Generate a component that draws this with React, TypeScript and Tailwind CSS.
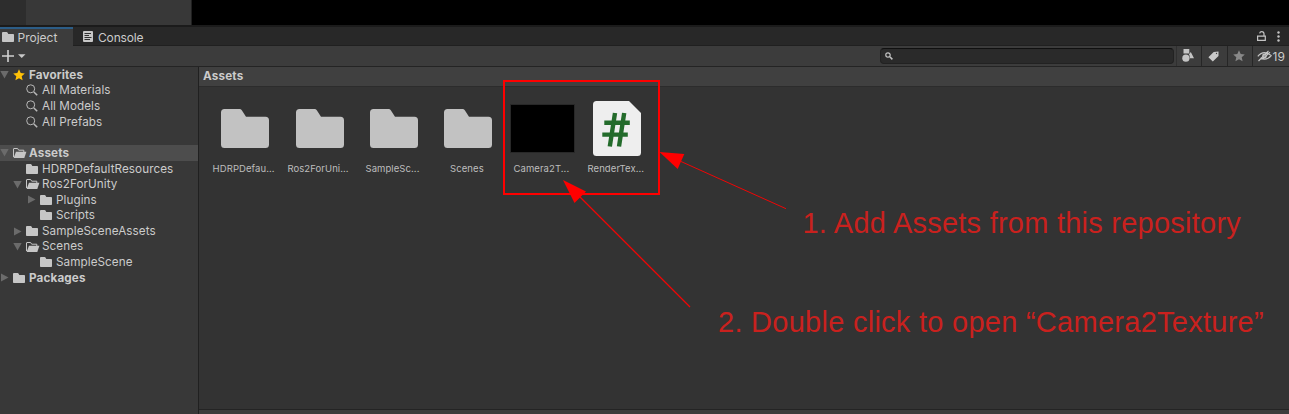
import React from 'react';

function Folder({ className = '' }: { className?: string }) {
  return (
    <svg className={`h-[10px] w-[12px] shrink-0 ${className}`} viewBox="0 0 12 10" fill="#c6c6c6">
      <path d="M0 .9Q0 0 .9 0H4.6Q5.2 0 5.5.6L6.3 2H11.2Q12 2 12 2.8V9.2Q12 10 11.2 10H.8Q0 10 0 9.2Z" />
    </svg>
  );
}

function OpenFolder() {
  return (
    <svg className="h-[10px] w-[13.5px] shrink-0" viewBox="0 0 13.5 10">
      <path d="M.5 9V1Q.5.5 1 .5H4.6L5.7 2.2H10.8V4" fill="none" stroke="#c6c6c6" />
      <path d="M3 3.7H13.4L11.3 10H.6Z" fill="#c6c6c6" />
    </svg>
  );
}

function Search() {
  return (
    <svg className="h-[12px] w-[12px] shrink-0" viewBox="0 0 12 12" fill="none" stroke="#b8b8b8">
      <circle cx="4.7" cy="4.8" r="4" strokeWidth="1" />
      <path d="M7.9 8L11.2 11.2" strokeWidth="1.6" />
    </svg>
  );
}

function Star({ className }: { className: string }) {
  return (
    <svg className={className} viewBox="0 0 12 12" fill="currentColor">
      <path d="M6 .3L7.7 4.1L11.8 4.5L8.7 7.2L9.6 11.3L6 9.2L2.4 11.3L3.3 7.2L.2 4.5L4.3 4.1Z" />
    </svg>
  );
}

function Arrow({ open }: { open?: boolean }) {
  return (
    <svg className="h-[9px] w-[9px] shrink-0" viewBox="0 0 9 9" fill="#6b6b6b">
      <path d={open ? 'M.3 1H8.7L4.5 8.4Z' : 'M1 .5V8.5L8.5 4.5Z'} />
    </svg>
  );
}

type Row = { label: string; pad: string; icon: 'star' | 'search' | 'open' | 'folder'; arrow?: 'open' | 'closed'; text: string };

const bold = 'font-bold text-[11.7px] tracking-[0.13px]';
const normal = 'text-[11.7px] tracking-[0.07px]';

const rows: (Row | null)[] = [
  { label: 'Favorites', pad: 'pl-0', icon: 'star', arrow: 'open', text: bold },
  { label: 'All Materials', pad: 'pl-[13px]', icon: 'search', text: normal },
  { label: 'All Models', pad: 'pl-[13px]', icon: 'search', text: normal },
  { label: 'All Prefabs', pad: 'pl-[13px]', icon: 'search', text: normal },
  null,
  { label: 'Assets', pad: 'pl-0', icon: 'open', arrow: 'open', text: bold },
  { label: 'HDRPDefaultResources', pad: 'pl-[13px]', icon: 'folder', text: normal },
  { label: 'Ros2ForUnity', pad: 'pl-[13px]', icon: 'open', arrow: 'open', text: normal },
  { label: 'Plugins', pad: 'pl-[27px]', icon: 'folder', arrow: 'closed', text: normal },
  { label: 'Scripts', pad: 'pl-[27px]', icon: 'folder', text: normal },
  { label: 'SampleSceneAssets', pad: 'pl-[13px]', icon: 'folder', arrow: 'closed', text: normal },
  { label: 'Scenes', pad: 'pl-[13px]', icon: 'open', arrow: 'open', text: normal },
  { label: 'SampleScene', pad: 'pl-[27px]', icon: 'folder', text: normal },
  { label: 'Packages', pad: 'pl-0', icon: 'folder', arrow: 'closed', text: bold },
];

function TreeRow({ row }: { row: Row }) {
  return (
    <div className={`flex h-[15.64px] items-center ${row.pad} ${row.label === 'Assets' ? 'bg-[#4d4d4d]' : ''}`}>
      <div className="-ml-[0.5px] flex w-[13.5px] shrink-0">{row.arrow && <Arrow open={row.arrow === 'open'} />}</div>
      <div className="flex w-[16px] shrink-0 items-center">
        {row.icon === 'star' && <Star className="h-[12px] w-[12px] text-[#ffc107]" />}
        {row.icon === 'search' && <Search />}
        {row.icon === 'open' && <OpenFolder />}
        {row.icon === 'folder' && <Folder />}
      </div>
      <span className={`whitespace-nowrap leading-[15px] ${row.icon === 'star' || row.icon === 'open' ? 'pt-[0.5px]' : 'pt-[1px]'} ${row.text}`}>{row.label}</span>
    </div>
  );
}

function BigFolder() {
  return (
    <svg className="mt-[8px] h-[39px] w-[48px]" viewBox="0 0 48 39" fill="#c2c2c2">
      <path d="M0 3.5Q0 0 3.5 0H18.5Q20 0 20.8 1.2L25 7.8H44.5Q48 7.8 48 11.3V35.5Q48 39 44.5 39H3.5Q0 39 0 35.5Z" />
    </svg>
  );
}

function ScriptFile() {
  return (
    <svg className="h-[55px] w-[48px]" viewBox="0 0 48 55">
      <path d="M0 3.5Q0 0 3.5 0H36L48 12V51.5Q48 55 44.5 55H3.5Q0 55 0 51.5Z" fill="#eeeeee" />
      <path d="M22 12L16.8 45.5M31.2 12L26 45.5M11.3 21.8H36.8M9.3 33.6H34.8" fill="none" stroke="#236b2b" strokeWidth="4.4" />
    </svg>
  );
}

const assets = ['HDRPDefau...', 'Ros2ForUni...', 'SampleSc...', 'Scenes', 'Camera2T...', 'RenderTex...'];

export default function App() {
  return (
    <div className="relative flex h-[414px] w-[1289px] flex-col overflow-hidden bg-[#383838] font-['Inter',sans-serif] text-[#cbcbcb]">
      <div className="flex h-[27px] shrink-0 border-b-2 border-[#1b1b1b] bg-black">
        <div className="w-[26px] bg-[#2d2d2d]" />
        <div className="w-[166px] border-r-[1.5px] border-[#202020] bg-[#383838]" />
      </div>

      <div className="flex h-[19px] shrink-0 bg-[#282828]">
        <div className="flex w-[73px] items-center border-t-2 border-[#2c5d87] bg-[#3c3c3c] pl-[2px]">
          <Folder className="-mt-[1px]" />
          <span className="ml-[3.5px] mt-[1px] text-[12px] leading-[16px]">Project</span>
        </div>
        <div className="flex grow items-center border-b border-[#202020] pl-[10px]">
          <svg className="h-[11px] w-[10px]" viewBox="0 0 10 11">
            <rect width="10" height="11" rx="1" fill="#c8c8c8" />
            <path d="M1.5 2.5H8M1.5 4.5H6M1.5 6.5H8.5M1.5 8.5H7" stroke="#303030" />
          </svg>
          <span className="ml-[5px] mt-[4px] text-[12px] leading-[16px] tracking-[-0.15px]">Console</span>
        </div>
        <div className="flex w-[35px] items-center border-b border-[#202020] pl-[3px]">
          <svg className="h-[10px] w-[9px]" viewBox="0 0 9 10" fill="none" stroke="#c4c4c4" strokeWidth="1.2">
            <path d="M.6 5.2H8.3V9.3H.6ZM7 5V2.8Q7 .6 4.8 .6Q3 .6 2.6 2.3" />
          </svg>
          <svg className="ml-[11px] h-[11px] w-[3px]" viewBox="0 0 3 11" fill="#c4c4c4">
            <circle cx="1.5" cy="1.5" r="1.2" /><circle cx="1.5" cy="5.5" r="1.2" /><circle cx="1.5" cy="9.5" r="1.2" />
          </svg>
        </div>
      </div>

      <div className="flex h-[21px] shrink-0 items-stretch border-b border-[#242424] bg-[#3c3c3c]">
        <svg className="ml-[2px] mt-[4px] h-[12px] w-[24px]" viewBox="0 0 24 12">
          <path d="M6 0V12M0 6H12" stroke="#d0d0d0" strokeWidth="1.6" />
          <path d="M16 4.2H23.5L19.75 8Z" fill="#c8c8c8" />
        </svg>
        <div className="ml-auto mt-[2px] flex h-[16px] w-[294px] items-center rounded-[4px] border border-t-[#101010] border-[#222222] bg-[#2a2a2a] pl-[4px]">
          <svg className="h-[8px] w-[8px]" viewBox="0 0 8 8" fill="none" stroke="#c4c4c4" strokeWidth="1.2">
            <circle cx="3" cy="3" r="2.2" /><path d="M4.8 4.8L7.4 7.4" strokeWidth="1.5" />
          </svg>
        </div>
        <div className="ml-[2px] flex w-[25px] items-start border-l border-[#303030] pl-[5px] pt-[3px]">
          <svg className="h-[13px] w-[12px]" viewBox="0 0 12 13" fill="#c4c4c4">
            <path d="M1.5 0H7.3V4.6H1.5ZM8.8 3L12 9.2H7.8Q8 6.3 6.9 5.5Z" /><circle cx="3.9" cy="9.2" r="3.6" />
          </svg>
        </div>
        <div className="flex w-[26px] items-center border-l border-[#262626] pl-[6px]">
          <svg className="h-[11px] w-[11px]" viewBox="0 0 11 11">
            <path fillRule="evenodd" d="M5.7 1L10.5 .4V5L4.8 10.6L.4 6.2ZM8.5 1.8A.6 .6 0 1 0 8.51 1.8Z" fill="#c8c8c8" />
          </svg>
        </div>
        <div className="flex w-[25px] items-center border-l border-[#262626] pl-[5px]">
          <Star className="h-[12px] w-[12px] text-[#888888]" />
        </div>
        <div className="flex w-[37px] items-center border-l border-[#262626] pl-[4px]">
          <svg className="h-[12px] w-[15px] shrink-0" viewBox="0 0 15 12" fill="none" stroke="#c4c4c4" strokeWidth="1.2">
            <path d="M.8 6.4Q3.8 2.6 7.5 2.6T14.2 5.6Q11.2 9.2 7.5 9.2Q5 9.2 3.4 8.3M1.5 11L11.5 .8M5.5 9L13 2.2" />
            <circle cx="7.5" cy="5.9" r="1.8" />
          </svg>
          <span className="ml-[0.5px] pt-[1px] text-[12px] leading-[16px]">19</span>
        </div>
      </div>

      <div className="flex min-h-0 grow">
        <div className="w-[199px] shrink-0 border-r border-[#202020]">
          {rows.map((row, i) => row ? <TreeRow key={i} row={row} /> : <div key={i} className="h-[15.64px]" />)}
        </div>
        <div className="flex grow flex-col bg-[#333333]">
          <div className="flex h-[20px] items-center border-b border-[#2c2c2c] bg-[#404040] pl-[4px] pt-[1px] text-[11.7px] font-bold tracking-[0.16px]">Assets</div>
          <div className="flex grow pl-[8.9px] pt-[14px]">
            {assets.map((name) => (
              <div key={name} className="flex w-[74.45px] flex-col items-center">
                <div className="flex h-[61px] items-start justify-center">
                  {name.startsWith('Camera') ? (
                    <div className="mt-[3px] h-[49px] w-[65px] border border-[#282828] bg-black" />
                  ) : name.startsWith('Render') ? <ScriptFile /> : <BigFolder />}
                </div>
                <span className="mr-[3px] whitespace-nowrap text-[9.5px] leading-[14px] tracking-[0.08px] text-[#bdbdbd]">{name}</span>
              </div>
            ))}
          </div>
          <div className="h-[5px] border-t border-[#242424] bg-[#3c3c3c]" />
        </div>
      </div>

      <div className="absolute left-[503px] top-[80px] h-[115px] w-[157px] border-2 border-[#ff0000]" />
      <svg className="absolute left-0 top-0 h-[414px] w-[1289px]" viewBox="0 0 1289 414">
        <path d="M659.5 152L684.3 154L677.7 169Z" fill="#ff0000" />
        <path d="M563 180L586 191.5L574.5 203Z" fill="#ff0000" />
        <line x1="681" y1="161.5" x2="786" y2="208.7" stroke="#f00505" strokeWidth="1" />
        <line x1="580" y1="197" x2="690" y2="307" stroke="#f00505" strokeWidth="1.3" />
      </svg>
      <div className="absolute left-[802.5px] top-[206px] whitespace-nowrap font-['Liberation_Sans',sans-serif] text-[29px] leading-[34px] tracking-[0.24px] text-[#c9211e]">1. Add Assets from this repository</div>
      <div className="absolute left-[718px] top-[305px] whitespace-nowrap font-['Liberation_Sans',sans-serif] text-[29px] leading-[34px] tracking-[0.27px] text-[#c9211e]">2. Double click to open “Camera2Texture”</div>
    </div>
  );
}
